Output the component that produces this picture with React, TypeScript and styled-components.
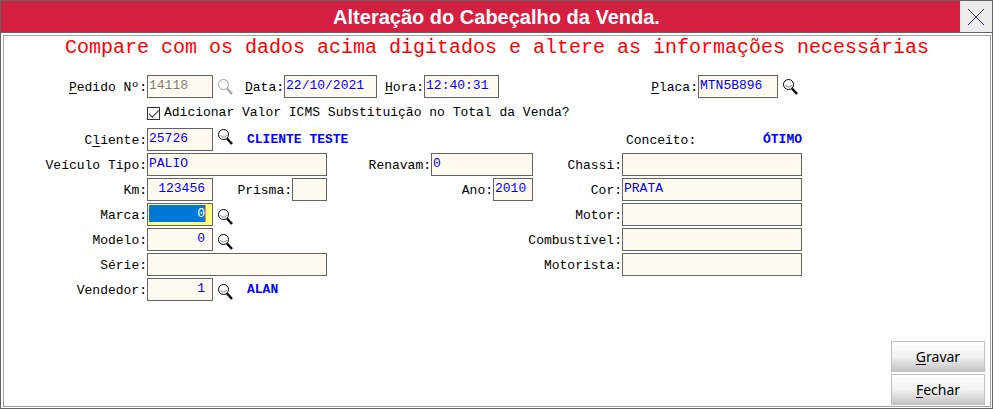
import React, { useId } from 'react';
import styled, { createGlobalStyle, css } from 'styled-components';

const GlobalStyle = createGlobalStyle`
  * { box-sizing: border-box; }
  body { margin: 0; background: #fff; }
`;

const mono = '"Liberation Mono", "Courier New", monospace';

const Window = styled.div`
  display: flex;
  flex-direction: column;
  min-height: 100vh;
  border: 1px solid #646464;
  background: #fff;
  color: #000;
  font: 13px/16px ${mono};
`;

const TitleBar = styled.header`
  display: flex;
  height: 32px;
  background: #d41f41;
  border-bottom: 1px solid #646464;
`;

const Title = styled.h1`
  flex: 1;
  margin: 0;
  padding-left: 32px;
  text-align: center;
  color: #fff;
  font: bold 20px/32px "Liberation Sans", Arial, sans-serif;
`;

const CloseButton = styled.button`
  display: grid;
  place-items: center;
  width: 32px;
  padding: 0;
  border: 0;
  background: #ececec;
`;

const Panel = styled.form`
  flex: 1;
  display: flex;
  flex-direction: column;
  margin: 2px 1px 1px 2px;
  border: 1px solid #a0a0a0;
`;

const Notice = styled.p`
  margin: 0 0 15px;
  text-align: center;
  color: #f00;
  font-size: 20px;
  line-height: 24px;
`;

const Fields = styled.div`
  display: flex;
  flex-direction: column;
  padding-right: 188px;
`;

const OrderRow = styled.div`
  display: flex;
  align-items: center;
  height: 23px;
`;

const CheckRow = styled.div`
  display: flex;
  align-items: center;
  gap: 4px;
  height: 30px;
  padding-left: 143px;
`;

const Columns = styled.div`
  display: grid;
  grid-template-columns: 323px 1fr 269px;
  grid-auto-rows: 23px;
  row-gap: 2px;
`;

const Cell = styled.div<{ $end?: boolean }>`
  display: flex;
  align-items: center;
  justify-content: ${p => (p.$end ? 'flex-end' : 'flex-start')};
`;

const Label = styled.label`
  padding-top: 2px;
  white-space: pre;
  text-underline-offset: 2px;
`;

const LeadLabel = styled(Label)`
  flex: none;
  width: 143px;
  text-align: right;
`;

const Input = styled.input<{ $width: number; $numeric?: boolean; $active?: boolean }>`
  flex: none;
  width: ${p => p.$width}px;
  height: 23px;
  padding: 0 2px 2px 1px;
  border: 1px solid #646464;
  border-radius: 0;
  outline: 0;
  background: #fffaf0;
  color: #0000ff;
  font: 13px/16px ${mono};
  &:disabled { color: #808080; }
  ${p => p.$numeric && css`
    padding-right: 7px;
    text-align: right;
  `}
  ${p => p.$active && css`
    background: linear-gradient(90deg, #0078d7 56px, #ff8728 56px) 1px 1px / 57px 17px no-repeat #ffff80;
    color: #fff;
  `}
`;

const Check = styled.input`
  appearance: none;
  display: grid;
  place-items: center;
  width: 13px;
  height: 13px;
  margin: 0;
  border: 1px solid #333;
  &:checked::before {
    content: '';
    width: 9px;
    height: 4px;
    border: solid #333;
    border-width: 0 0 1px 1px;
    transform: translateY(-1px) rotate(-45deg);
  }
`;

const IconButton = styled.button<{ $align?: string }>`
  flex: none;
  align-self: ${p => p.$align ?? 'center'};
  display: grid;
  place-items: center;
  width: 24px;
  height: 18px;
  padding: 0;
  border: 0;
  background: none;
  color: #000;
  &:disabled { color: #a0a0a0; }
`;

const Value = styled.output`
  color: #0000ff;
  font-weight: bold;
  white-space: pre;
`;

const NameValue = styled(Value)`
  padding-left: 10px;
`;

const RatingPair = styled.div`
  display: flex;
  align-items: center;
  justify-content: space-between;
  width: 176px;
`;

const Spacer = styled.span<{ $width?: number }>`
  flex: ${p => (p.$width ? `0 0 ${p.$width}px` : '1')};
`;

const Actions = styled.footer`
  display: flex;
  flex-direction: column;
  align-items: flex-end;
  gap: 2px;
  margin-top: auto;
  padding: 0 5px 1px;
`;

const ActionButton = styled.button`
  width: 94px;
  height: 31px;
  padding: 0;
  border: 1px solid #c0c0c0;
  background: linear-gradient(#fff 0%, #f2f2f2 50%, #c4c4c4 100%);
  color: #000;
  font: 14px/20px "Noto Sans", "Open Sans", sans-serif;
  text-underline-offset: 2px;
`;

function Magnifier({ shine = true }: { shine?: boolean }) {
  return (
    <svg width="16" height="16" viewBox="0 0 16 16" fill="none" stroke="currentColor" aria-hidden="true">
      <circle cx="6.5" cy="5.5" r="5" />
      {shine && <path d="M3.5 6c.5 2.6 5.5 2.6 6 0" stroke="#808080" />}
      <path d="M10 9.5L15 15" strokeWidth={shine ? 2.4 : 2} />
    </svg>
  );
}

function Search({ label, disabled, align }: { label: string; disabled?: boolean; align?: string }) {
  return (
    <IconButton type="button" aria-label={label} disabled={disabled} $align={align}>
      <Magnifier shine={!disabled} />
    </IconButton>
  );
}

type FieldProps = {
  label: React.ReactNode;
  width: number;
  value?: string;
  numeric?: boolean;
  active?: boolean;
  disabled?: boolean;
  lead?: boolean;
};

function Field({ label, width, value = '', numeric, active, disabled, lead }: FieldProps) {
  const id = useId();
  const Caption = lead ? LeadLabel : Label;
  return (
    <>
      <Caption htmlFor={id}>{label}:</Caption>
      <Input id={id} defaultValue={value} disabled={disabled} $width={width} $numeric={numeric} $active={active} />
    </>
  );
}

export default function App() {
  return (
    <>
      <GlobalStyle />
      <Window>
        <TitleBar>
          <Title>Alteração do Cabeçalho da Venda.</Title>
          <CloseButton type="button" aria-label="Fechar janela">
            <svg width="16" height="16" viewBox="0 0 16 16" stroke="#1a2f5c" aria-hidden="true">
              <path d="M0 0L16 16M16 0L0 16" />
            </svg>
          </CloseButton>
        </TitleBar>
        <Panel>
          <Notice>Compare com os dados acima digitados e altere as informações necessárias</Notice>
          <Fields>
            <OrderRow>
              <Field lead label={<><u>P</u>edido Nº</>} width={66} value="14118" disabled />
              <Search label="Buscar pedido" disabled />
              <Spacer $width={8} />
              <Field label={<><u>D</u>ata</>} width={93} value="22/10/2021" />
              <Spacer $width={8} />
              <Field label={<><u>H</u>ora</>} width={75} value="12:40:31" />
              <Spacer />
              <Field label={<><u>P</u>laca</>} width={80} value="MTN5B896" />
              <Search label="Buscar placa" />
            </OrderRow>
            <CheckRow>
              <Check type="checkbox" id="icms" defaultChecked />
              <label htmlFor="icms">Adicionar Valor ICMS Substituição no Total da Venda?</label>
            </CheckRow>
            <Columns>
              <Cell>
                <Field lead label={<>C<u>l</u>iente</>} width={66} value="25726" />
                <Search label="Buscar cliente" align="flex-start" />
                <NameValue>CLIENTE TESTE</NameValue>
              </Cell>
              <Cell />
              <Cell $end>
                <RatingPair>
                  <Label as="span">Conceito:</Label>
                  <Value>ÓTIMO</Value>
                </RatingPair>
              </Cell>

              <Cell><Field lead label="Veículo Tipo" width={180} value="PALIO" /></Cell>
              <Cell $end><Field label="Renavam" width={102} value="0" /></Cell>
              <Cell $end><Field label="Chassi" width={180} /></Cell>

              <Cell>
                <Field lead label="Km" width={66} value="123456" numeric />
                <Spacer />
                <Field label="Prisma" width={35} />
              </Cell>
              <Cell $end><Field label="Ano" width={40} value="2010" /></Cell>
              <Cell $end><Field label="Cor" width={180} value="PRATA" /></Cell>

              <Cell>
                <Field lead label="Marca" width={66} value="0" numeric active />
                <Search label="Buscar marca" align="flex-end" />
              </Cell>
              <Cell />
              <Cell $end><Field label="Motor" width={180} /></Cell>

              <Cell>
                <Field lead label="Modelo" width={66} value="0" numeric />
                <Search label="Buscar modelo" align="flex-end" />
              </Cell>
              <Cell />
              <Cell $end><Field label="Combustível" width={180} /></Cell>

              <Cell><Field lead label="Série" width={180} /></Cell>
              <Cell />
              <Cell $end><Field label="Motorista" width={180} /></Cell>

              <Cell>
                <Field lead label="Vendedor" width={66} value="1" numeric />
                <Search label="Buscar vendedor" align="flex-end" />
                <NameValue>ALAN</NameValue>
              </Cell>
            </Columns>
          </Fields>
          <Actions>
            <ActionButton type="button"><u>G</u>ravar</ActionButton>
            <ActionButton type="button"><u>F</u>echar</ActionButton>
          </Actions>
        </Panel>
      </Window>
    </>
  );
}
